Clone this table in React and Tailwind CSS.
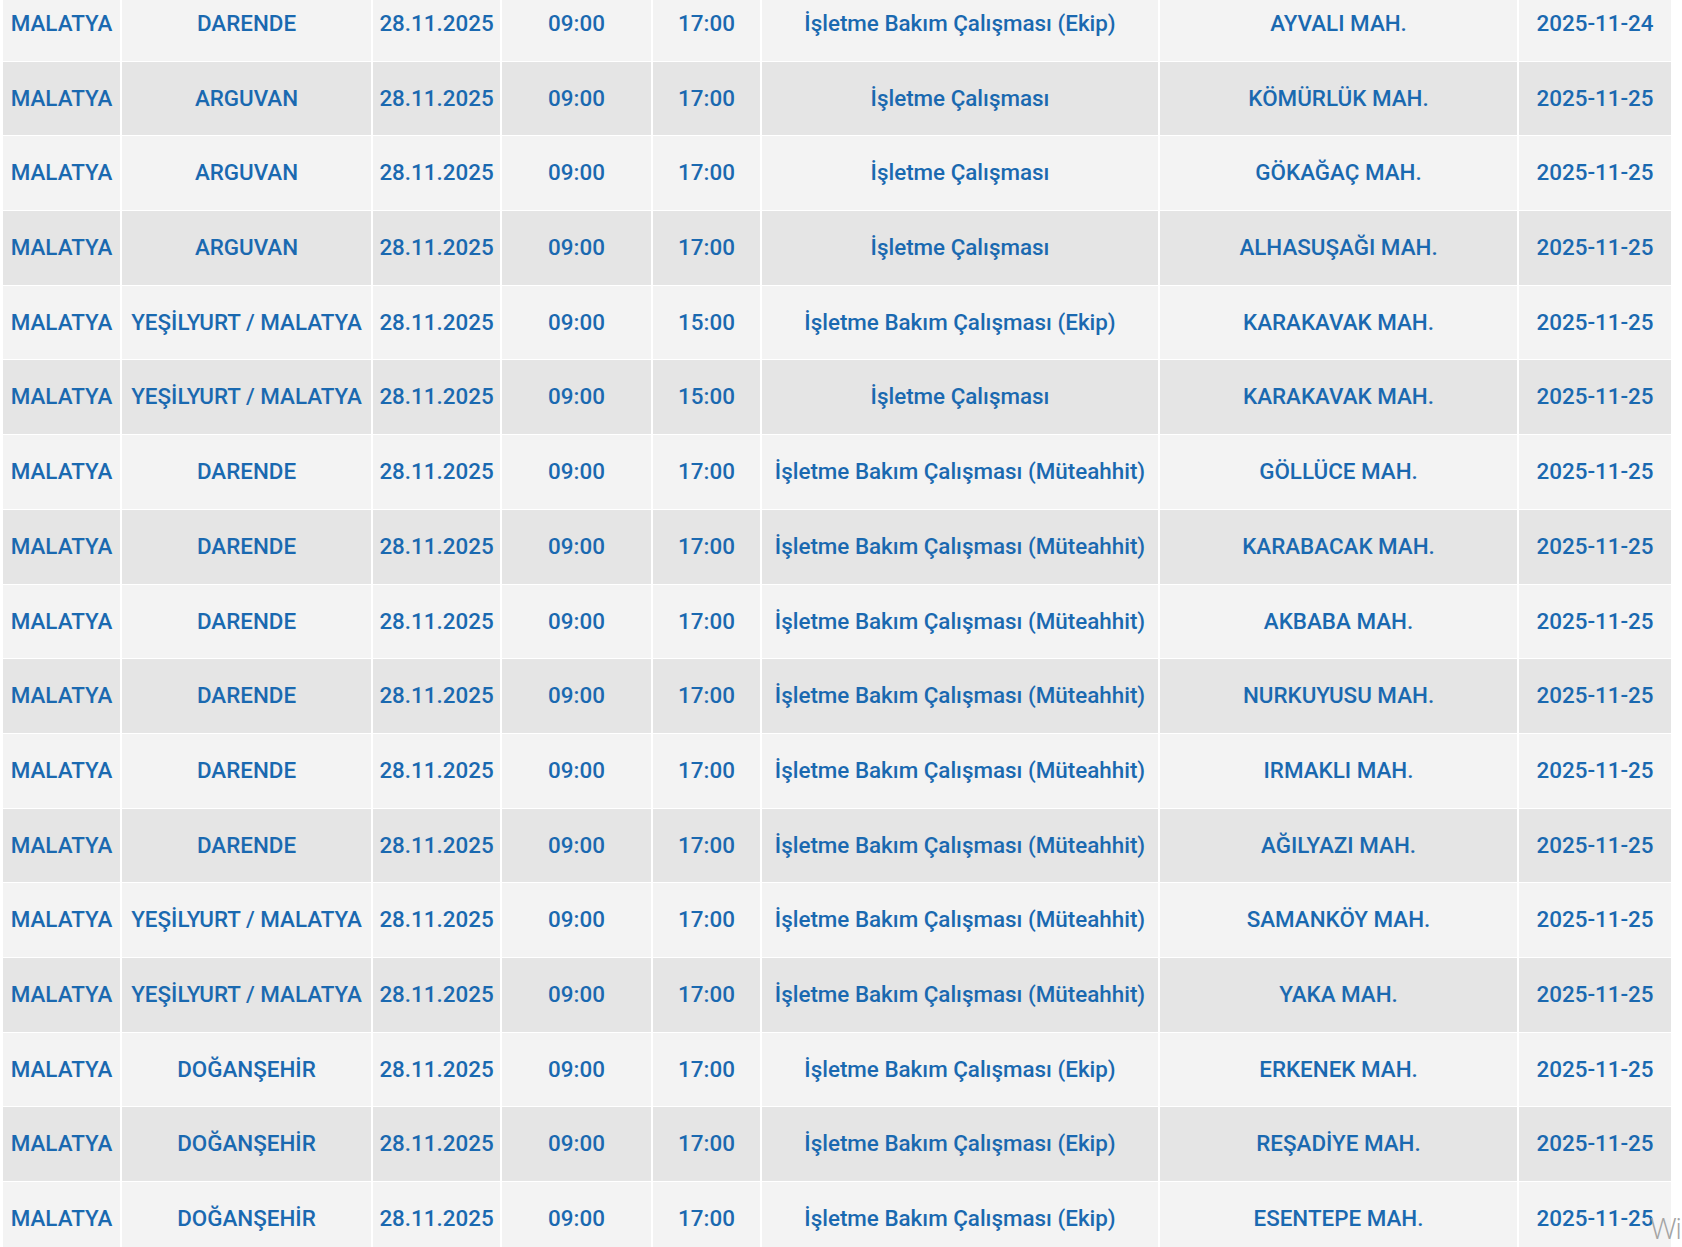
const rows = [
  ["DARENDE", "17:00", "İşletme Bakım Çalışması (Ekip)", "AYVALI MAH.", "2025-11-24"],
  ["ARGUVAN", "17:00", "İşletme Çalışması", "KÖMÜRLÜK MAH.", "2025-11-25"],
  ["ARGUVAN", "17:00", "İşletme Çalışması", "GÖKAĞAÇ MAH.", "2025-11-25"],
  ["ARGUVAN", "17:00", "İşletme Çalışması", "ALHASUŞAĞI MAH.", "2025-11-25"],
  ["YEŞİLYURT / MALATYA", "15:00", "İşletme Bakım Çalışması (Ekip)", "KARAKAVAK MAH.", "2025-11-25"],
  ["YEŞİLYURT / MALATYA", "15:00", "İşletme Çalışması", "KARAKAVAK MAH.", "2025-11-25"],
  ["DARENDE", "17:00", "İşletme Bakım Çalışması (Müteahhit)", "GÖLLÜCE MAH.", "2025-11-25"],
  ["DARENDE", "17:00", "İşletme Bakım Çalışması (Müteahhit)", "KARABACAK MAH.", "2025-11-25"],
  ["DARENDE", "17:00", "İşletme Bakım Çalışması (Müteahhit)", "AKBABA MAH.", "2025-11-25"],
  ["DARENDE", "17:00", "İşletme Bakım Çalışması (Müteahhit)", "NURKUYUSU MAH.", "2025-11-25"],
  ["DARENDE", "17:00", "İşletme Bakım Çalışması (Müteahhit)", "IRMAKLI MAH.", "2025-11-25"],
  ["DARENDE", "17:00", "İşletme Bakım Çalışması (Müteahhit)", "AĞILYAZI MAH.", "2025-11-25"],
  ["YEŞİLYURT / MALATYA", "17:00", "İşletme Bakım Çalışması (Müteahhit)", "SAMANKÖY MAH.", "2025-11-25"],
  ["YEŞİLYURT / MALATYA", "17:00", "İşletme Bakım Çalışması (Müteahhit)", "YAKA MAH.", "2025-11-25"],
  ["DOĞANŞEHİR", "17:00", "İşletme Bakım Çalışması (Ekip)", "ERKENEK MAH.", "2025-11-25"],
  ["DOĞANŞEHİR", "17:00", "İşletme Bakım Çalışması (Ekip)", "REŞADİYE MAH.", "2025-11-25"],
  ["DOĞANŞEHİR", "17:00", "İşletme Bakım Çalışması (Ekip)", "ESENTEPE MAH.", "2025-11-25"],
];

export default function App() {
  return (
    <div className="relative h-[1247px] w-[1682px] overflow-hidden bg-white font-['Roboto',sans-serif] text-[22.4px] font-medium text-[#1a69b0]">
      <div className="mt-[-13px] grid grid-cols-[117px_249px_127px_149px_107px_396px_357px_152px] gap-x-[2px] gap-y-[1px] pl-[3px]">
        {rows.map(([ilce, end, desc, mah, date], i) => {
          const bg = i % 2 === 0 ? "bg-[#f3f3f3]" : "bg-[#e5e5e5]";
          const cells = ["MALATYA", ilce, "28.11.2025", "09:00", end, desc, mah, date];
          return cells.map((c, j) => (
            <div key={`${i}-${j}`} className={`flex h-[73.7px] items-center justify-center whitespace-nowrap ${bg}`}>
              {c}
            </div>
          ));
        })}
      </div>
      {/* windows activation watermark, cut by the screen edge */}
      <div className="absolute left-[1650px] top-[1213px] font-['Open_Sans',sans-serif] text-[30px] font-light leading-none tracking-tighter text-[#a3a3a3]">
        Wi
      </div>
    </div>
  );
}
